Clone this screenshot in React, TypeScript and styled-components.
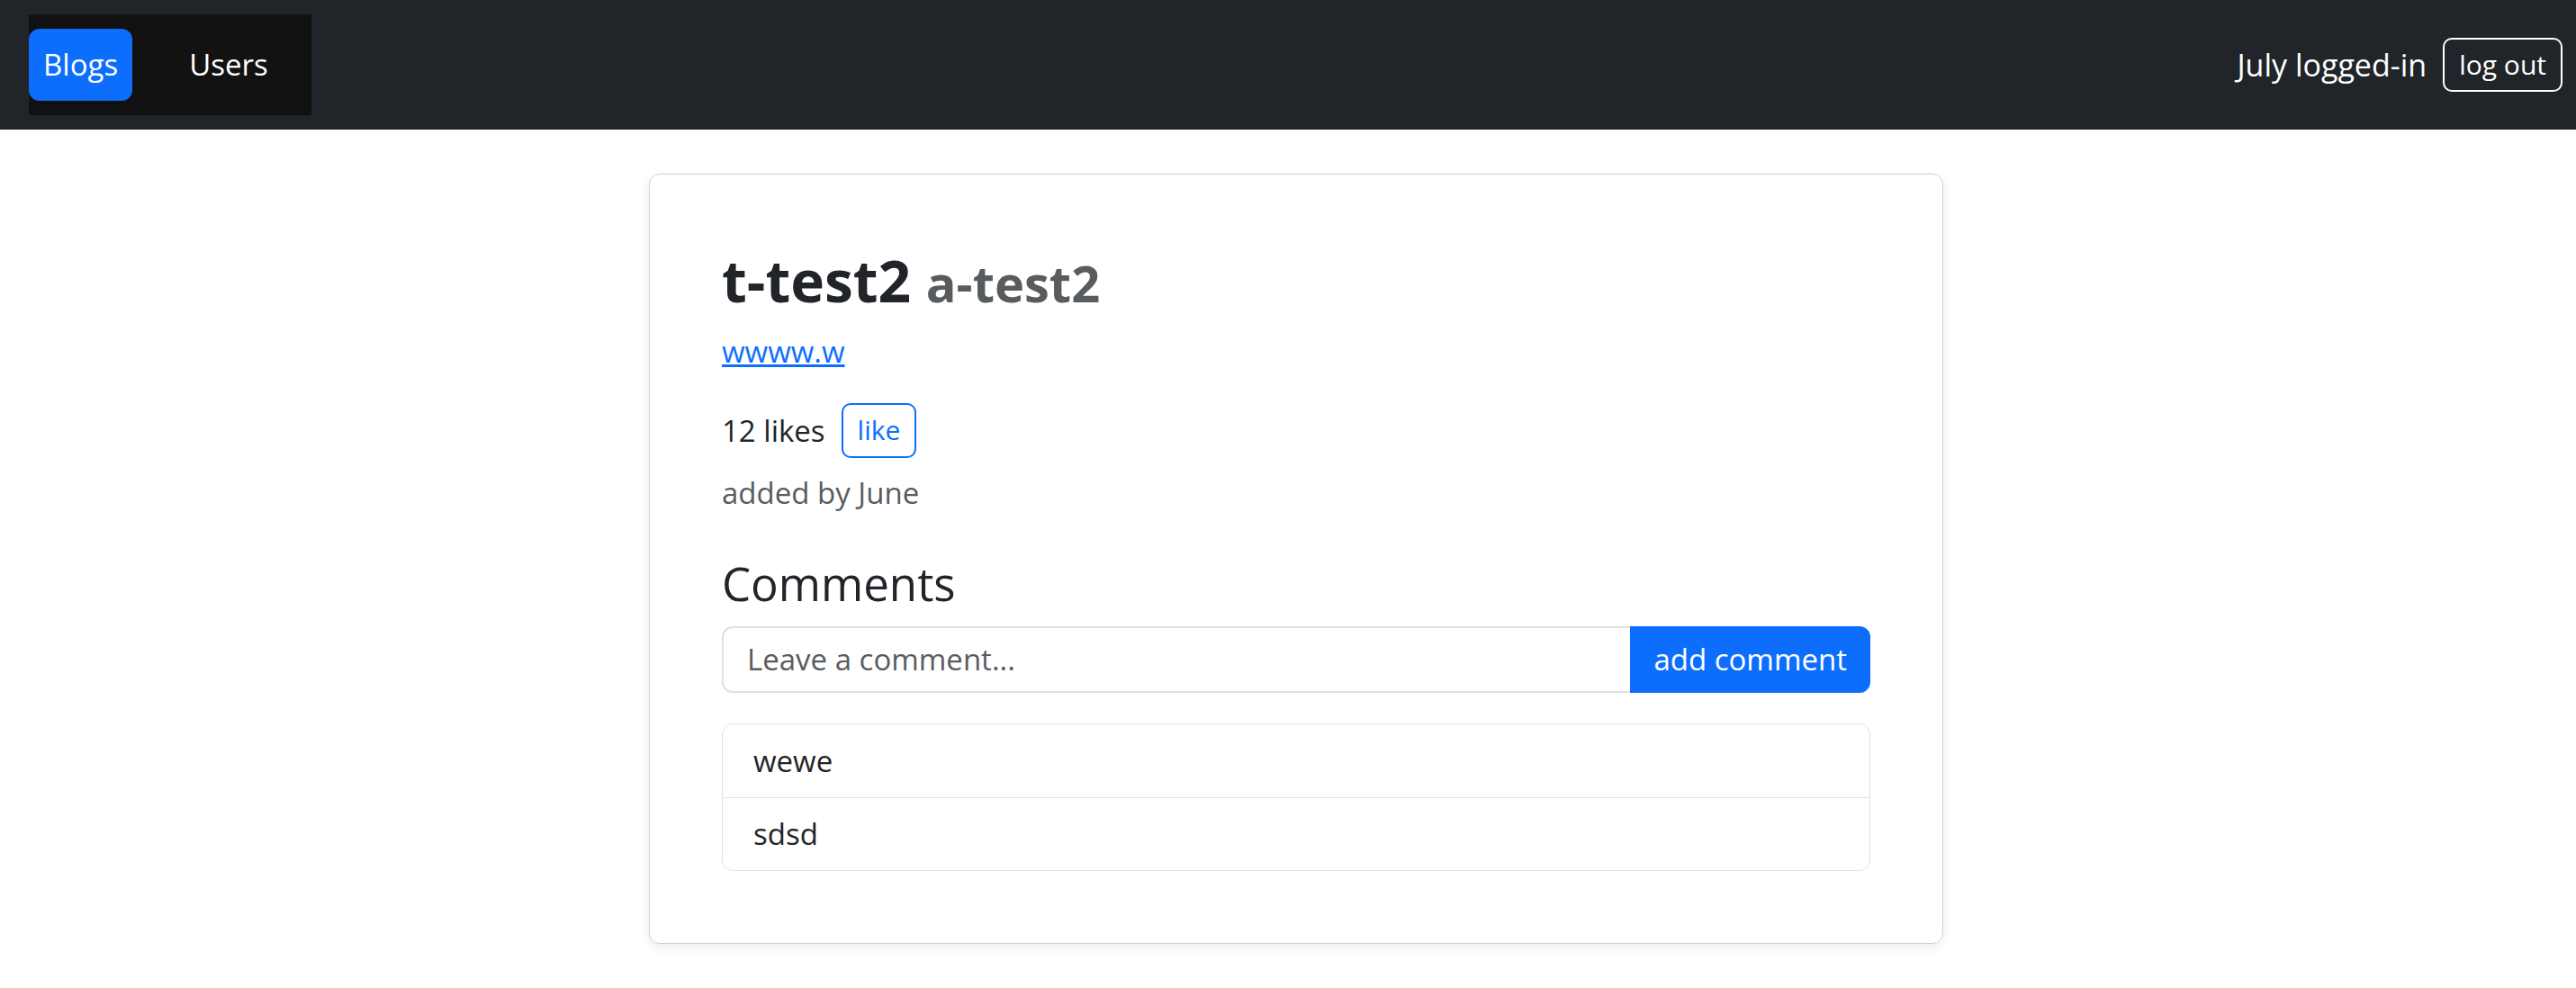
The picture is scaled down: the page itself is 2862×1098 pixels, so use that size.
import React from "react";
import styled, { createGlobalStyle } from "styled-components";

const GlobalStyle = createGlobalStyle`
  html, body {
    margin: 0;
    padding: 0;
    background: #ffffff;
  }
  body {
    font-family: "Open Sans", "Noto Sans", sans-serif;
    font-size: 33px;
    line-height: 1.5;
    color: #212529;
  }
  * { box-sizing: border-box; }
`;

const NavBar = styled.header`
  height: 144px;
  background: #212529;
  display: flex;
  align-items: center;
  justify-content: space-between;
  padding: 0 15px 0 32px;
`;

const NavStrip = styled.nav`
  display: flex;
  align-items: center;
  gap: 47px;
  padding: 16px 32px 16px 0;
  background: #111111;
`;

const NavPill = styled.a<{ $active?: boolean }>`
  height: 80px;
  padding: 0 16px;
  display: flex;
  align-items: center;
  border-radius: 12px;
  font-size: 33px;
  color: #ffffff;
  text-decoration: none;
  background: ${(p) => (p.$active ? "#0d6efd" : "#121212")};
`;

const UserArea = styled.div`
  display: flex;
  align-items: center;
  gap: 18px;
`;

const UserText = styled.span`
  color: #ffffff;
  font-size: 34px;
`;

const SmallButton = styled.button<{ $tone: "light" | "primary" }>`
  height: ${(p) => (p.$tone === "light" ? "60px" : "61px")};
  padding: 0 16px;
  border-radius: 10px;
  background: transparent;
  font-family: inherit;
  font-size: 30px;
  line-height: 1;
  border: 2px solid ${(p) => (p.$tone === "light" ? "#ffffff" : "#0d6efd")};
  color: ${(p) => (p.$tone === "light" ? "#ffffff" : "#0d6efd")};
`;

const Main = styled.main`
  display: flex;
  justify-content: center;
  padding: 49px 0 40px 18px;
`;

const Card = styled.section`
  width: 1438px;
  border: 1.5px solid #d0d0d0;
  border-radius: 12px;
  box-shadow: 0 4px 12px rgba(0, 0, 0, 0.08);
  padding: 80px;
  display: flex;
  flex-direction: column;
`;

const Title = styled.h2`
  margin: 0 0 14px;
  font-size: 64px;
  font-weight: 700;
  line-height: 1.2;
  color: #212529;
`;

const Author = styled.span`
  font-size: 56px;
  font-weight: 700;
  color: #595c5f;
`;

const BlogLink = styled.a`
  align-self: flex-start;
  color: #0d6efd;
  text-decoration: underline;
  line-height: 51px;
`;

const LikesRow = styled.div`
  margin-top: 32px;
  display: flex;
  align-items: center;
  gap: 18px;
`;

const Muted = styled.div`
  margin-top: 13px;
  color: #595c5f;
  line-height: 51px;
`;

const SectionTitle = styled.h3`
  margin: 42px 0 14px;
  font-size: 51px;
  font-weight: 400;
  line-height: 67px;
`;

const InputGroup = styled.form`
  display: flex;
  height: 74px;
`;

const CommentInput = styled.input`
  flex: 1;
  min-width: 0;
  border: 2px solid #dee2e6;
  border-right: none;
  border-radius: 12px 0 0 12px;
  padding: 0 26px;
  font-family: inherit;
  font-size: 33px;
  color: #212529;
  outline: none;
  &::placeholder {
    color: #595c5f;
  }
`;

const PrimaryButton = styled.button`
  border: none;
  background: #0d6efd;
  color: #ffffff;
  font-family: inherit;
  font-size: 33px;
  padding: 0 26px;
  border-radius: 0 12px 12px 0;
`;

const CommentList = styled.ul`
  list-style: none;
  margin: 34px 0 0;
  padding: 0;
  border: 1.5px solid #dee2e6;
  border-radius: 12px;
`;

const CommentItem = styled.li`
  height: 81px;
  display: flex;
  align-items: center;
  padding: 0 34px;
  & + & {
    border-top: 1.5px solid #dee2e6;
  }
`;

const comments = ["wewe", "sdsd"];

export default function App() {
  return (
    <>
      <GlobalStyle />
      <NavBar>
        <NavStrip>
          <NavPill $active href="#">Blogs</NavPill>
          <NavPill href="#">Users</NavPill>
        </NavStrip>
        <UserArea>
          <UserText>July logged-in</UserText>
          <SmallButton $tone="light">log out</SmallButton>
        </UserArea>
      </NavBar>
      <Main>
        <Card>
          <Title>
            t-test2 <Author>a-test2</Author>
          </Title>
          <BlogLink href="#">wwww.w</BlogLink>
          <LikesRow>
            <span>12 likes</span>
            <SmallButton $tone="primary">like</SmallButton>
          </LikesRow>
          <Muted>added by June</Muted>
          <SectionTitle>Comments</SectionTitle>
          <InputGroup onSubmit={(e) => e.preventDefault()}>
            <CommentInput placeholder="Leave a comment..." />
            <PrimaryButton type="submit">add comment</PrimaryButton>
          </InputGroup>
          <CommentList>
            {comments.map((c) => (
              <CommentItem key={c}>{c}</CommentItem>
            ))}
          </CommentList>
        </Card>
      </Main>
    </>
  );
}
